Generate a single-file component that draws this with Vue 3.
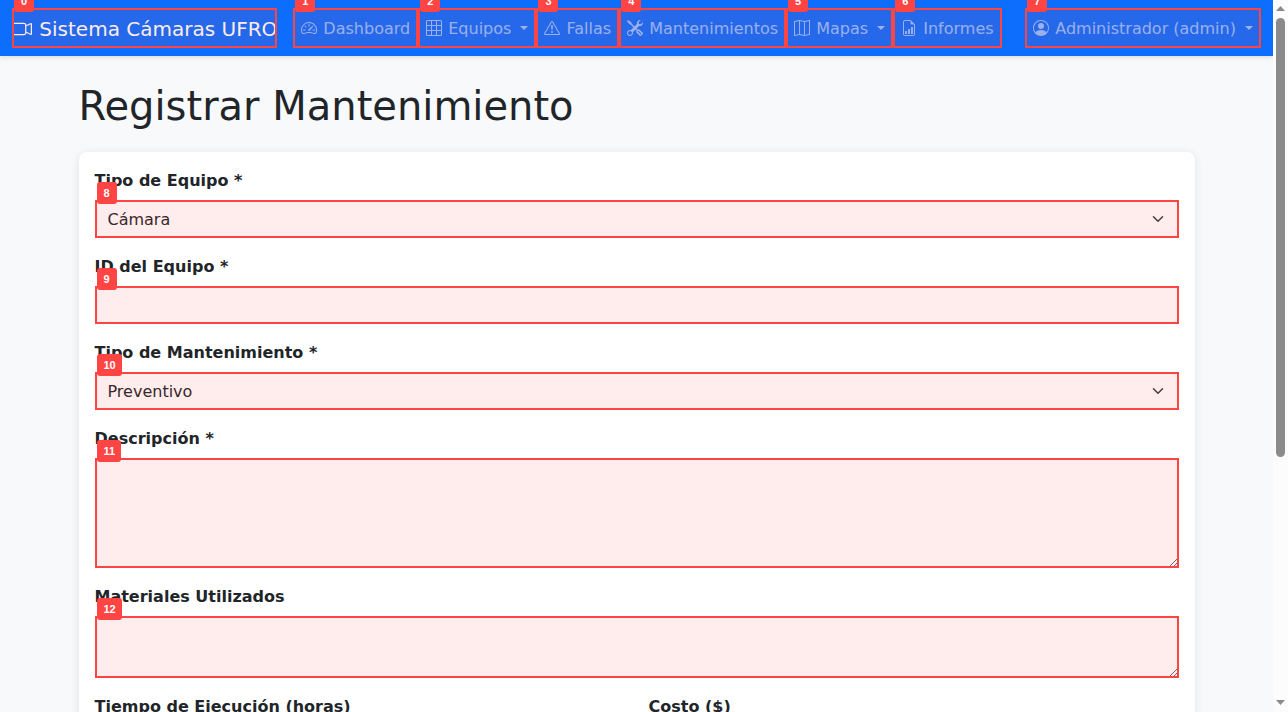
<script setup>
import { ref } from 'vue'

const icons = {
  camera: 'M0 5a2 2 0 0 1 2-2h7.5a2 2 0 0 1 1.983 1.738l3.11-1.382A1 1 0 0 1 16 4.269v7.462a1 1 0 0 1-1.406.913l-3.111-1.382A2 2 0 0 1 9.5 13H2a2 2 0 0 1-2-2V5zm11.5 5.175 3.5 1.556V4.269l-3.5 1.556v4.35zM2 4a1 1 0 0 0-1 1v6a1 1 0 0 0 1 1h7.5a1 1 0 0 0 1-1V5a1 1 0 0 0-1-1H2z',
  speed: 'M8 4a.5.5 0 0 1 .5.5V6a.5.5 0 0 1-1 0V4.5A.5.5 0 0 1 8 4zM3.732 5.732a.5.5 0 0 1 .707 0l.915.914a.5.5 0 1 1-.708.708l-.914-.915a.5.5 0 0 1 0-.707zM2 10a.5.5 0 0 1 .5-.5h1.586a.5.5 0 0 1 0 1H2.5A.5.5 0 0 1 2 10zm9.5 0a.5.5 0 0 1 .5-.5h1.5a.5.5 0 0 1 0 1H12a.5.5 0 0 1-.5-.5zm.754-4.246a.389.389 0 0 0-.527-.02L7.547 9.31a.91.91 0 1 0 1.302 1.258l3.434-4.297a.389.389 0 0 0-.029-.518zM0 10a8 8 0 1 1 15.547 2.661c-.442 1.253-1.845 1.602-2.932 1.25C11.309 13.488 9.475 13 8 13c-1.474 0-3.31.488-4.615.911-1.087.352-2.49.003-2.932-1.25A7.988 7.988 0 0 1 0 10zm8-7a7 7 0 0 0-6.603 9.329c.203.575.923.876 1.68.63C4.397 12.533 6.358 12 8 12s3.604.532 4.923.96c.757.245 1.477-.056 1.68-.631A7 7 0 0 0 8 3z',
  grid: 'M0 1.5A1.5 1.5 0 0 1 1.5 0h13A1.5 1.5 0 0 1 16 1.5v13a1.5 1.5 0 0 1-1.5 1.5h-13A1.5 1.5 0 0 1 0 14.5v-13zM1.5 1a.5.5 0 0 0-.5.5V5h4V1H1.5zM5 6H1v4h4V6zm1 4h4V6H6v4zm-1 1H1v3.5a.5.5 0 0 0 .5.5H5v-4zm1 0v4h4v-4H6zm5 0v4h3.5a.5.5 0 0 0 .5-.5V11h-4zm0-1h4V6h-4v4zm0-5h4V1.5a.5.5 0 0 0-.5-.5H11v4zm-1 0V1H6v4h4z',
  warning: 'M7.938 2.016A.13.13 0 0 1 8.002 2a.13.13 0 0 1 .063.016.146.146 0 0 1 .054.057l6.857 11.667c.036.06.035.124.002.183a.163.163 0 0 1-.054.06.116.116 0 0 1-.066.017H1.146a.115.115 0 0 1-.066-.017.163.163 0 0 1-.054-.06.176.176 0 0 1 .002-.183L7.884 2.073a.147.147 0 0 1 .054-.057zm1.044-.45a1.13 1.13 0 0 0-1.96 0L.165 13.233c-.457.778.091 1.767.98 1.767h13.713c.889 0 1.438-.99.98-1.767L8.982 1.566zM7.002 12a1 1 0 1 1 2 0 1 1 0 0 1-2 0zM7.1 5.995a.905.905 0 1 1 1.8 0l-.35 3.507a.552.552 0 0 1-1.1 0L7.1 5.995z',
  tools: 'M1 0 0 1l2.2 3.081a1 1 0 0 0 .815.419h.07a1 1 0 0 1 .708.293l2.675 2.675-2.617 2.654A3.003 3.003 0 0 0 0 13a3 3 0 1 0 5.878-.851l2.654-2.617.968.968-.305.914a1 1 0 0 0 .242 1.023l3.27 3.27a.997.997 0 0 0 1.414 0l1.586-1.586a.997.997 0 0 0 0-1.414l-3.27-3.27a1 1 0 0 0-1.023-.242L10.5 9.5l-.96-.96 2.68-2.643A3.005 3.005 0 0 0 16 3c0-.269-.035-.53-.102-.777l-2.14 2.141L12 4l-.364-1.757L13.777.102a3 3 0 0 0-3.675 3.68L7.462 6.46 4.793 3.793a1 1 0 0 1-.293-.707v-.071a1 1 0 0 0-.419-.814L1 0zm9.646 10.646a.5.5 0 0 1 .708 0l2.914 2.915a.5.5 0 0 1-.707.707l-2.915-2.914a.5.5 0 0 1 0-.708zM3 11l.471.242.529.026.287.445.445.287.026.529L5 13l-.242.471-.026.529-.445.287-.287.445-.529.026L3 15l-.471-.242L2 14.732l-.287-.445L1.268 14l-.026-.529L1 13l.242-.471.026-.529.445-.287.287-.445.529-.026L3 11z',
  map: 'M15.817.113A.5.5 0 0 1 16 .5v14a.5.5 0 0 1-.402.49l-5 1a.502.502 0 0 1-.196 0L5.5 15.01l-4.902.98A.5.5 0 0 1 0 15.5v-14a.5.5 0 0 1 .402-.49l5-1a.5.5 0 0 1 .196 0L10.5.99l4.902-.98a.5.5 0 0 1 .415.103zM10 1.91l-4-.8v12.98l4 .8V1.91zm1 12.98 4-.8V1.11l-4 .8v12.98zm-6-.8V1.11l-4 .8v12.98l4-.8z',
  report: 'M10 13.5a.5.5 0 0 0 .5.5h1a.5.5 0 0 0 .5-.5v-6a.5.5 0 0 0-.5-.5h-1a.5.5 0 0 0-.5.5v6zm-2.5.5a.5.5 0 0 1-.5-.5v-4a.5.5 0 0 1 .5-.5h1a.5.5 0 0 1 .5.5v4a.5.5 0 0 1-.5.5h-1zm-3 0a.5.5 0 0 1-.5-.5v-2a.5.5 0 0 1 .5-.5h1a.5.5 0 0 1 .5.5v2a.5.5 0 0 1-.5.5h-1zM14 14V4.5L9.5 0H4a2 2 0 0 0-2 2v12a2 2 0 0 0 2 2h8a2 2 0 0 0 2-2zM9.5 3A1.5 1.5 0 0 0 11 4.5h2V14a1 1 0 0 1-1 1H4a1 1 0 0 1-1-1V2a1 1 0 0 1 1-1h5.5v2z',
  person: 'M11 6a3 3 0 1 1-6 0 3 3 0 0 1 6 0zM0 8a8 8 0 1 1 16 0A8 8 0 0 1 0 8zm8-7a7 7 0 0 0-5.468 11.37C3.242 11.226 4.805 10 8 10s4.757 1.225 5.468 2.37A7 7 0 0 0 8 1z'
}

const links = [
  { mark: 1, label: 'Dashboard', icon: icons.speed },
  { mark: 2, label: 'Equipos', icon: icons.grid, menu: true },
  { mark: 3, label: 'Fallas', icon: icons.warning },
  { mark: 4, label: 'Mantenimientos', icon: icons.tools },
  { mark: 5, label: 'Mapas', icon: icons.map, menu: true },
  { mark: 6, label: 'Informes', icon: icons.report },
  { mark: 7, label: 'Administrador (admin)', icon: icons.person, menu: true, user: true }
]

const fields = [
  { mark: 8, id: 'tipo-equipo', label: 'Tipo de Equipo *', kind: 'select', option: 'Cámara' },
  { mark: 9, id: 'id-equipo', label: 'ID del Equipo *', kind: 'input' },
  { mark: 10, id: 'tipo-mantenimiento', label: 'Tipo de Mantenimiento *', kind: 'select', option: 'Preventivo' },
  { mark: 11, id: 'descripcion', label: 'Descripción *', kind: 'textarea', rows: 4 },
  { mark: 12, id: 'materiales', label: 'Materiales Utilizados', kind: 'textarea', rows: 2 }
]

const values = ref({
  'tipo-equipo': 'Cámara',
  'id-equipo': '',
  'tipo-mantenimiento': 'Preventivo',
  descripcion: '',
  materiales: '',
  horas: '',
  costo: ''
})
</script>

<template>
  <div class="window">
    <div class="page">
      <nav class="navbar">
        <a class="brand marked" href="#"><svg class="icon" viewBox="0 0 16 16"><path fill-rule="evenodd" :d="icons.camera" /></svg> Sistema Cámaras UFRO<span class="mark"><span class="tag">0</span></span></a>
        <component
          :is="link.menu ? 'button' : 'a'"
          v-for="link in links"
          :key="link.mark"
          class="link marked"
          :class="{ user: link.user }"
          :href="link.menu ? undefined : '#'"
          :type="link.menu ? 'button' : undefined"
        ><svg class="icon" viewBox="0 0 16 16"><path fill-rule="evenodd" :d="link.icon" /></svg> {{ link.label }} <span v-if="link.menu" class="caret"></span><span class="mark"><span class="tag">{{ link.mark }}</span></span></component>
      </nav>

      <main class="container">
        <h1>Registrar Mantenimiento</h1>
        <form class="card" @submit.prevent>
          <div v-for="field in fields" :key="field.id" class="field">
            <label :for="field.id">{{ field.label }}</label>
            <div class="marked">
              <template v-if="field.kind === 'select'">
                <select :id="field.id" v-model="values[field.id]" class="control">
                  <option>{{ field.option }}</option>
                </select>
                <svg class="chevron" viewBox="0 0 16 16"><path d="m2 5 6 6 6-6" /></svg>
              </template>
              <textarea v-else-if="field.kind === 'textarea'" :id="field.id" v-model="values[field.id]" class="control" :rows="field.rows"></textarea>
              <input v-else :id="field.id" v-model="values[field.id]" class="control" type="text">
              <span class="mark"><span class="tag">{{ field.mark }}</span></span>
            </div>
          </div>
          <div class="row">
            <div class="field">
              <label for="horas">Tiempo de Ejecución (horas)</label>
              <input id="horas" v-model="values.horas" class="control outlined" type="number">
            </div>
            <div class="field">
              <label for="costo">Costo ($)</label>
              <input id="costo" v-model="values.costo" class="control outlined" type="number">
            </div>
          </div>
        </form>
      </main>
    </div>

    <div class="scrollbar" aria-hidden="true">
      <svg viewBox="0 0 15 17"><path d="M3 11h9L7.500 6z" /></svg>
      <div class="track"><div class="thumb"></div></div>
      <svg viewBox="0 0 15 17"><path d="M3 5h9L7.500 10z" /></svg>
    </div>
  </div>
</template>

<style>
body {
  margin: 0;
  background: #f8f9fa;
}
</style>

<style scoped>
* {
  box-sizing: border-box;
}
.window {
  display: grid;
  grid-template-columns: minmax(0, 1fr) 15px;
  height: 100vh;
  overflow: hidden;
  color: #212529;
  font: 16px/24px Verdana, "DejaVu Sans", sans-serif;
}
.page {
  overflow: hidden;
  background: #f8f9fa;
}
.navbar {
  display: flex;
  align-items: center;
  padding: 8px 12px;
  background: #0d6efd;
  box-shadow: 0 2px 4px rgba(0, 0, 0, 0.1);
}
.marked {
  position: relative;
}
.brand {
  margin-right: 16px;
  padding: 6px 0 4px;
  color: #fff;
  font-size: 20px;
  line-height: 30px;
  text-decoration: none;
  white-space: nowrap;
}
.link {
  padding: 9px 8px 7px;
  border: 0;
  background: none;
  color: rgba(255, 255, 255, 0.55);
  font: inherit;
  text-decoration: none;
  white-space: nowrap;
}
.user {
  margin-left: auto;
}
.icon {
  display: inline-block;
  width: 1em;
  height: 1em;
  margin-right: 1px;
  fill: currentColor;
  vertical-align: -0.125em;
}
.caret {
  display: inline-block;
  margin-left: 4px;
  border: 4px solid transparent;
  border-top-color: currentColor;
  border-bottom: 0;
  vertical-align: 4px;
}
.mark {
  position: absolute;
  inset: 0;
  border: 2px solid #f44;
  background: rgba(255, 68, 68, 0.1);
  pointer-events: none;
}
.tag {
  position: absolute;
  top: -20px;
  left: 0;
  min-width: 20px;
  padding: 0 6px 0 7px;
  border-radius: 3px;
  background: #f44;
  color: #fff;
  font: bold 11px/22px "Liberation Sans", sans-serif;
  text-align: left;
}
.container {
  max-width: 1140px;
  margin: 24px auto 0;
  padding: 0 12px;
}
h1 {
  margin: 0 0 22px;
  padding-top: 2px;
  font-size: 40px;
  font-weight: 400;
  line-height: 48px;
}
.card {
  padding: 16px;
  border-radius: 8px;
  background: #fff;
  box-shadow: 0 2px 10px rgba(0, 0, 0, 0.1);
}
.field {
  margin-bottom: 16px;
}
label {
  display: block;
  margin-bottom: 7px;
  padding-top: 1px;
  font-weight: 700;
}
.control {
  display: block;
  width: 100%;
  margin: 0;
  padding: 7px 12px 5px;
  border: 1px solid transparent;
  border-radius: 0;
  outline: 0;
  background: #fff;
  color: #212529;
  font: inherit;
  appearance: none;
}
.outlined {
  border-color: #dee2e6;
  border-radius: 6px;
}
textarea.control {
  resize: vertical;
}
.chevron {
  position: absolute;
  top: 13px;
  right: 15px;
  width: 12px;
  height: 12px;
  fill: none;
  stroke: #343a40;
  stroke-width: 2;
  stroke-linecap: round;
  stroke-linejoin: round;
  pointer-events: none;
}
.row {
  display: grid;
  grid-template-columns: 1fr 1fr;
  gap: 24px;
}
.scrollbar {
  display: grid;
  grid-template-rows: 17px 1fr 17px;
  background: #fcfcfc;
}
.scrollbar svg {
  width: 15px;
  height: 17px;
  fill: #8b8b8b;
}
.track {
  padding: 1px 3px;
}
.thumb {
  height: 65%;
  border-radius: 5px;
  background: #8b8b8b;
}
</style>
